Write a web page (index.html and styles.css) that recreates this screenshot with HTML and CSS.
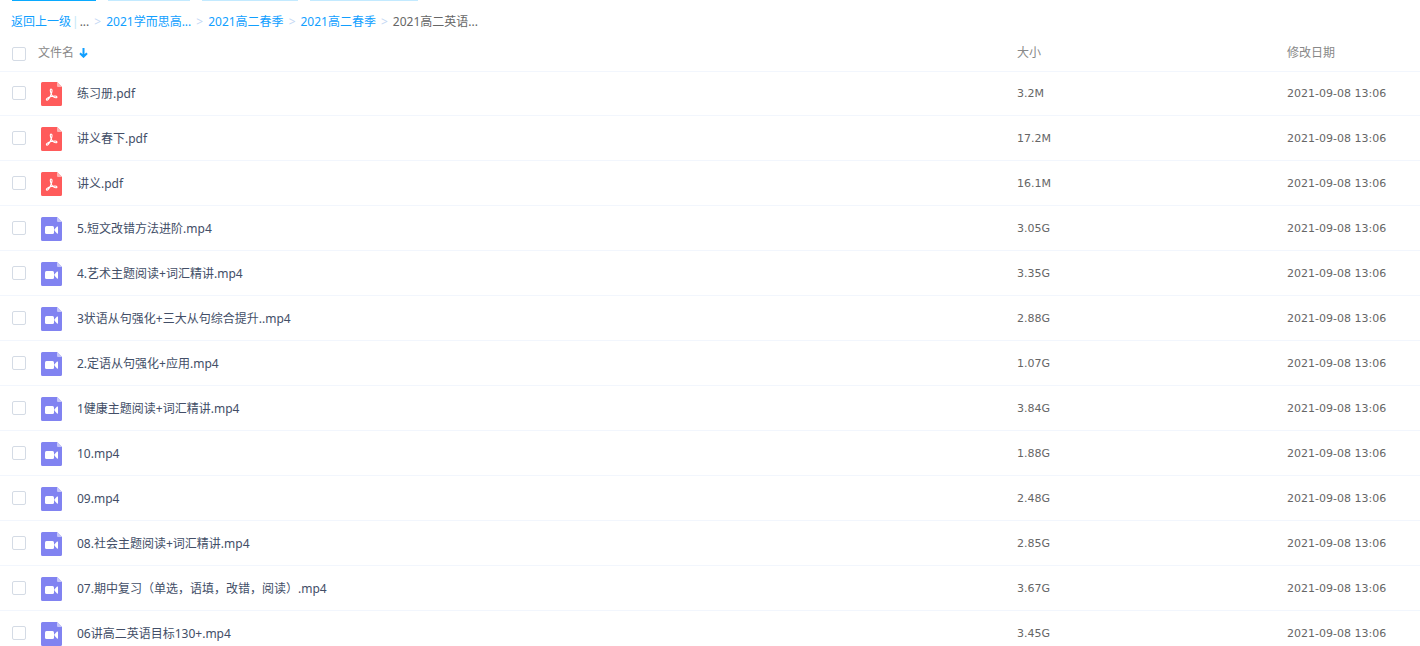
FILE: index.html
```html
<!DOCTYPE html>
<html lang="zh-CN">
<head>
<meta charset="utf-8">
<title>文件列表</title>
<link rel="stylesheet" href="styles.css">
</head>
<body>
<svg class="sprite" aria-hidden="true">
  <symbol id="pdf" viewBox="0 0 21 24">
    <path fill="#ff5b5b" d="M1.500 0H16l5 5v17.500a1.500 1.500 0 0 1-1.500 1.500h-18A1.500 1.500 0 0 1 0 22.500v-21A1.500 1.500 0 0 1 1.500 0z"/>
    <path fill="#ffb3b3" d="M16 0l5 5h-4a1 1 0 0 1-1-1z"/>
    <path fill="none" stroke="#fff" stroke-width="1.100" stroke-linecap="round" stroke-linejoin="round" d="M10 7c1.300 0 1.200 1.700.7 3.500-.6 2.500-2.100 5.500-3.600 7.100-1.100 1.200-2.400.1-1.300-1 1.700-1.500 5.300-2.600 8.200-2.600 2.400 0 2.500 1.900.8 1.700-2-.2-4.300-2.500-5-5-.5-1.600-.9-3.600.2-3.700z"/>
  </symbol>
  <symbol id="video" viewBox="0 0 21 24">
    <path fill="#8183f1" d="M1.500 0H16l5 5v17.500a1.500 1.500 0 0 1-1.500 1.500h-18A1.500 1.500 0 0 1 0 22.500v-21A1.500 1.500 0 0 1 1.500 0z"/>
    <path fill="#c6c7fa" d="M16 0l5 5h-4a1 1 0 0 1-1-1z"/>
    <rect x="4" y="9" width="9" height="8" rx="1.500" fill="#fff"/>
    <path fill="#fff" d="M13.500 12.200L16 9.600q1-.6 1 .4v6q0 1-1 .4l-2.500-2.600z"/>
  </symbol>
</svg>
<div class="tabs" aria-hidden="true">
  <span class="tab tab-active"></span><span class="tab tab-s"></span><span class="tab tab-m"></span><span class="tab tab-l"></span>
</div>
<nav class="crumbs">
  <a href="#">返回上一级</a><span class="bar">|</span><span class="current">...</span><span class="sep">&gt;</span><a href="#">2021学而思高...</a><span class="sep">&gt;</span><a href="#">2021高二春季</a><span class="sep">&gt;</span><a href="#">2021高二春季</a><span class="sep">&gt;</span><span class="current">2021高二英语...</span>
</nav>
<table class="files">
  <thead>
    <tr>
      <th class="name"><div class="cell"><input type="checkbox" aria-label="全选"><span class="heading">文件名</span><svg class="sort" viewBox="0 0 9 10" aria-hidden="true"><path d="M4.500 0v9M1 5.200l3.500 3.500L8 5.200" fill="none" stroke="#119fff" stroke-width="2"/></svg></div></th>
      <th class="size">大小</th>
      <th class="date">修改日期</th>
    </tr>
  </thead>
  <tbody id="rows"></tbody>
</table>
<script src="files.js"></script>
</body>
</html>
```

FILE: styles.css
```css
body {
  margin: 0;
  height: 100vh;
  overflow: hidden;
  background: #fff;
  color: #424e67;
  font-family: "Noto Sans", "Noto Sans CJK SC", sans-serif;
  font-size: 12px;
  line-height: 18px;
}

.sprite {
  display: none;
}

.tabs {
  display: flex;
  gap: 12px;
  height: 1px;
  padding: 0 12px;
}

.tab {
  background: #c3eaff;
}

.tab-active {
  width: 84px;
  background: #09aaff;
}

.tab-s {
  width: 82px;
}

.tab-m {
  width: 96px;
}

.tab-l {
  width: 108px;
}

.crumbs {
  display: flex;
  align-items: center;
  height: 35px;
  padding: 7px 11px 0;
  box-sizing: border-box;
  white-space: pre;
}

.crumbs a {
  color: #119fff;
  text-decoration: none;
}

.bar {
  margin: 0 1px;
  color: #c4e7f7;
}

.sep {
  margin: 0 5px;
  color: #c4d8f4;
}

.current {
  color: #666;
}

.files {
  width: 100%;
  table-layout: fixed;
  border-collapse: separate;
  border-spacing: 0;
}

.files th,
.files td {
  height: 42px;
  padding: 2px 0 0;
  border-bottom: 1px solid #f2f6fd;
  text-align: left;
  font-weight: normal;
}

.files th {
  height: 33px;
  padding: 0 0 2px;
  color: #888;
}

.files tbody tr:first-child td {
  height: 43px;
  padding: 0;
}

.size {
  width: 270px;
}

.date {
  width: 133px;
}

.files td.size,
.files td.date {
  color: #666;
  font-family: "DejaVu Sans", sans-serif;
  font-size: 11px;
}

.cell {
  display: flex;
  align-items: center;
  padding-left: 12px;
}

.cell input {
  appearance: none;
  width: 14px;
  height: 14px;
  margin: 0;
  border: 1px solid #d4dbe5;
  border-radius: 2px;
  background: #fff;
}

.files td input {
  margin-bottom: 2px;
}

.files th input {
  margin-top: 2px;
}

.heading {
  margin: 0 5px 0 12px;
}

.sort {
  width: 9px;
  height: 10px;
}

.icon {
  width: 21px;
  height: 24px;
  margin: 0 15px;
}
```

FILE: files.js
```js
const files = [
  ["练习册.pdf", "3.2M"],
  ["讲义春下.pdf", "17.2M"],
  ["讲义.pdf", "16.1M"],
  ["5.短文改错方法进阶.mp4", "3.05G"],
  ["4.艺术主题阅读+词汇精讲.mp4", "3.35G"],
  ["3状语从句强化+三大从句综合提升..mp4", "2.88G"],
  ["2.定语从句强化+应用.mp4", "1.07G"],
  ["1健康主题阅读+词汇精讲.mp4", "3.84G"],
  ["10.mp4", "1.88G"],
  ["09.mp4", "2.48G"],
  ["08.社会主题阅读+词汇精讲.mp4", "2.85G"],
  ["07.期中复习（单选，语填，改错，阅读）.mp4", "3.67G"],
  ["06讲高二英语目标130+.mp4", "3.45G"]
];

document.getElementById("rows").innerHTML = files.map(([name, size], i) => `
  <tr>
    <td class="name"><div class="cell">
      <input type="checkbox" id="file-${i}">
      <svg class="icon" aria-hidden="true"><use href="#${name.endsWith("pdf") ? "pdf" : "video"}"/></svg>
      <label for="file-${i}">${name}</label>
    </div></td>
    <td class="size">${size}</td>
    <td class="date">2021-09-08 13:06</td>
  </tr>`).join("");
```
